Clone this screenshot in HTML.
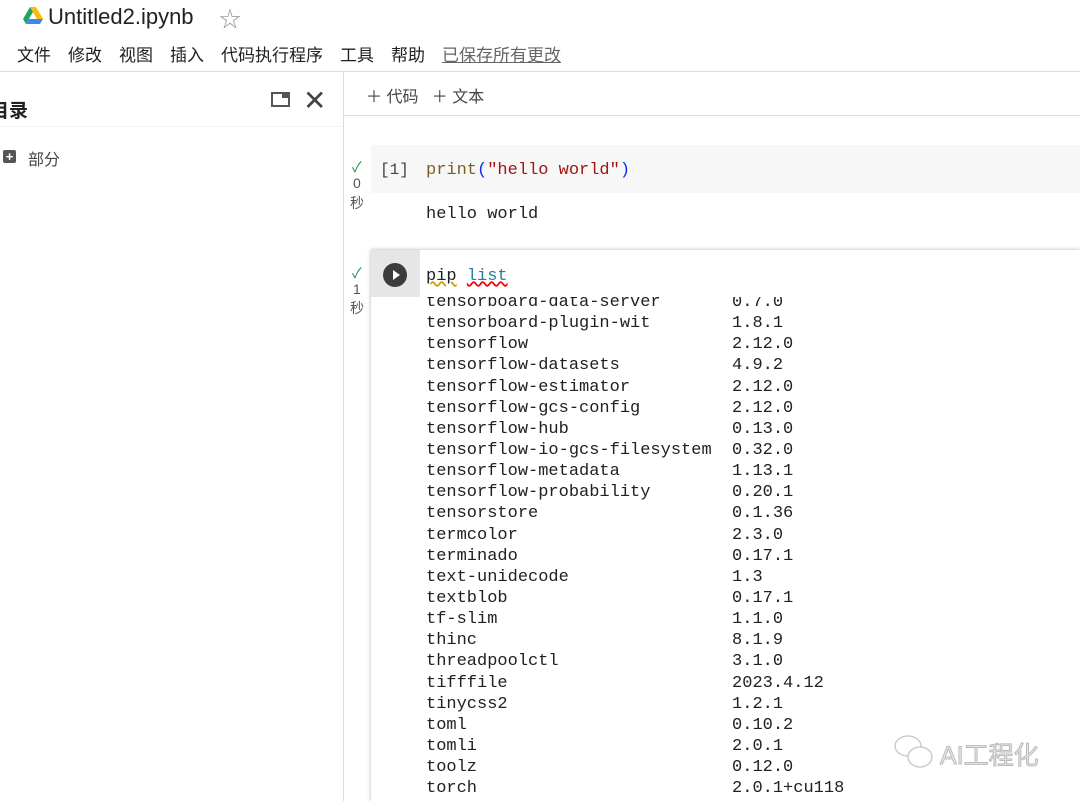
<!DOCTYPE html><html><head><meta charset="utf-8"><style>
body{margin:0;width:1080px;height:801px;overflow:hidden;background:#fff;font-family:"Liberation Sans","Noto Sans CJK SC",sans-serif;position:relative;color:#202124}
.a{position:absolute}
.mono{font-family:"Liberation Mono",monospace;font-size:17px}
.out div{height:21.15px;line-height:21px;white-space:pre}
.m span{margin-right:17px}
</style></head><body>
<svg class="a" style="left:23px;top:7px" width="20" height="18" viewBox="0 0 20 18"><path d="M7 0h6l7 12h-6z" fill="#fbbc04"/><path d="M7 0L0 12l3 5 7-12z" fill="#1ea362"/><path d="M3 17h14l3-5H6z" fill="#4285f4"/></svg>
<div class="a" style="left:48px;top:4px;font-size:22px">Untitled2.ipynb</div>
<div class="a" style="left:219px;top:2px;font-size:22px;color:#999">☆</div>
<div class="a m" style="left:17px;top:41px;font-size:17px">
<span>文件</span><span>修改</span><span>视图</span><span>插入</span><span>代码执行程序</span><span>工具</span><span>帮助</span><span style="color:#666;text-decoration:underline">已保存所有更改</span></div>
<div class="a" style="left:0;top:71px;width:1080px;height:1px;background:#ddd"></div>
<div class="a" style="left:343px;top:72px;width:1px;height:729px;background:#ddd"></div>
<div class="a" style="left:-10px;top:96px;font-size:19px;font-weight:bold">目录</div>
<div class="a" style="left:271px;top:92px;width:19px;height:15px;border:2px solid #555;box-sizing:border-box"></div>
<div class="a" style="left:282px;top:92px;width:8px;height:6px;background:#555"></div>
<div class="a" style="left:303px;top:84px;font-size:28px;color:#444">✕</div>
<div class="a" style="left:0;top:126px;width:343px;height:1px;background:#f3f3f3"></div>
<div class="a" style="left:3px;top:150px;width:13px;height:13px;background:#555;border-radius:2px;color:#fff;font-size:13px;line-height:13px;text-align:center;font-weight:bold">+</div>
<div class="a" style="left:28px;top:146px;font-size:16px;color:#444">部分</div>
<div class="a" style="left:366px;top:83px;font-size:16px;color:#444">＋ 代码 &nbsp;&nbsp;＋ 文本</div>
<div class="a" style="left:344px;top:115px;width:736px;height:1px;background:#ddd"></div>
<div class="a" style="left:371px;top:145px;width:709px;height:48px;background:#f7f7f7"></div>
<div class="a" style="left:352px;top:157px;color:#1e8e3e;font-size:14px">✓</div>
<div class="a" style="left:353px;top:175px;color:#555;font-size:14px">0</div>
<div class="a" style="left:350px;top:193px;color:#555;font-size:14px">秒</div>
<div class="a mono" style="left:380px;top:161px;font-size:16px;color:#444">[1]</div>
<div class="a mono" style="left:426px;top:161px"><span style="color:#795e26">print</span><span style="color:#0431fa">(</span><span style="color:#a31515">"hello world"</span><span style="color:#0431fa">)</span></div>
<div class="a mono" style="left:426px;top:205px">hello world</div>
<div class="a" style="left:371px;top:250px;width:709px;height:551px;background:#fff;box-shadow:0 0 4px rgba(0,0,0,.3)"></div>
<div class="a" style="left:371px;top:250px;width:49px;height:47px;background:#e6e6e6"></div>
<div class="a" style="left:383px;top:263px;width:24px;height:24px;border-radius:50%;background:#3c3c3c"></div>
<svg class="a" style="left:383px;top:263px" width="24" height="24"><path d="M10 7l7 5-7 5z" fill="#fff"/></svg>
<div class="a" style="left:352px;top:263px;color:#1e8e3e;font-size:14px">✓</div>
<div class="a" style="left:353px;top:281px;color:#555;font-size:14px">1</div>
<div class="a" style="left:350px;top:298px;color:#555;font-size:14px">秒</div>
<div class="a mono" style="left:426px;top:267px"><span style="text-decoration:underline wavy #c90">pip</span> <span style="color:#267f99;text-decoration:underline wavy #e00">list</span></div>
<div class="a" style="left:371px;top:297px;width:709px;height:504px;overflow:hidden">
<div class="a mono out" style="left:55px;top:-5px">
<div>tensorboard-data-server       0.7.0</div><div>tensorboard-plugin-wit        1.8.1</div><div>tensorflow                    2.12.0</div><div>tensorflow-datasets           4.9.2</div><div>tensorflow-estimator          2.12.0</div><div>tensorflow-gcs-config         2.12.0</div><div>tensorflow-hub                0.13.0</div><div>tensorflow-io-gcs-filesystem  0.32.0</div><div>tensorflow-metadata           1.13.1</div><div>tensorflow-probability        0.20.1</div><div>tensorstore                   0.1.36</div><div>termcolor                     2.3.0</div><div>terminado                     0.17.1</div><div>text-unidecode                1.3</div><div>textblob                      0.17.1</div><div>tf-slim                       1.1.0</div><div>thinc                         8.1.9</div><div>threadpoolctl                 3.1.0</div><div>tifffile                      2023.4.12</div><div>tinycss2                      1.2.1</div><div>toml                          0.10.2</div><div>tomli                         2.0.1</div><div>toolz                         0.12.0</div><div>torch                         2.0.1+cu118</div>
</div></div>
<svg class="a" style="left:893px;top:733px" width="42" height="38"><ellipse cx="15" cy="13" rx="13" ry="10" fill="none" stroke="#ccc" stroke-width="1.5"/><ellipse cx="27" cy="24" rx="12" ry="10" fill="#fff" stroke="#ccc" stroke-width="1.5"/></svg>
<div class="a" style="left:940px;top:736px;font-size:25px;color:#e8e8e8;-webkit-text-stroke:1px #bbb">AI工程化</div>
</body></html>
